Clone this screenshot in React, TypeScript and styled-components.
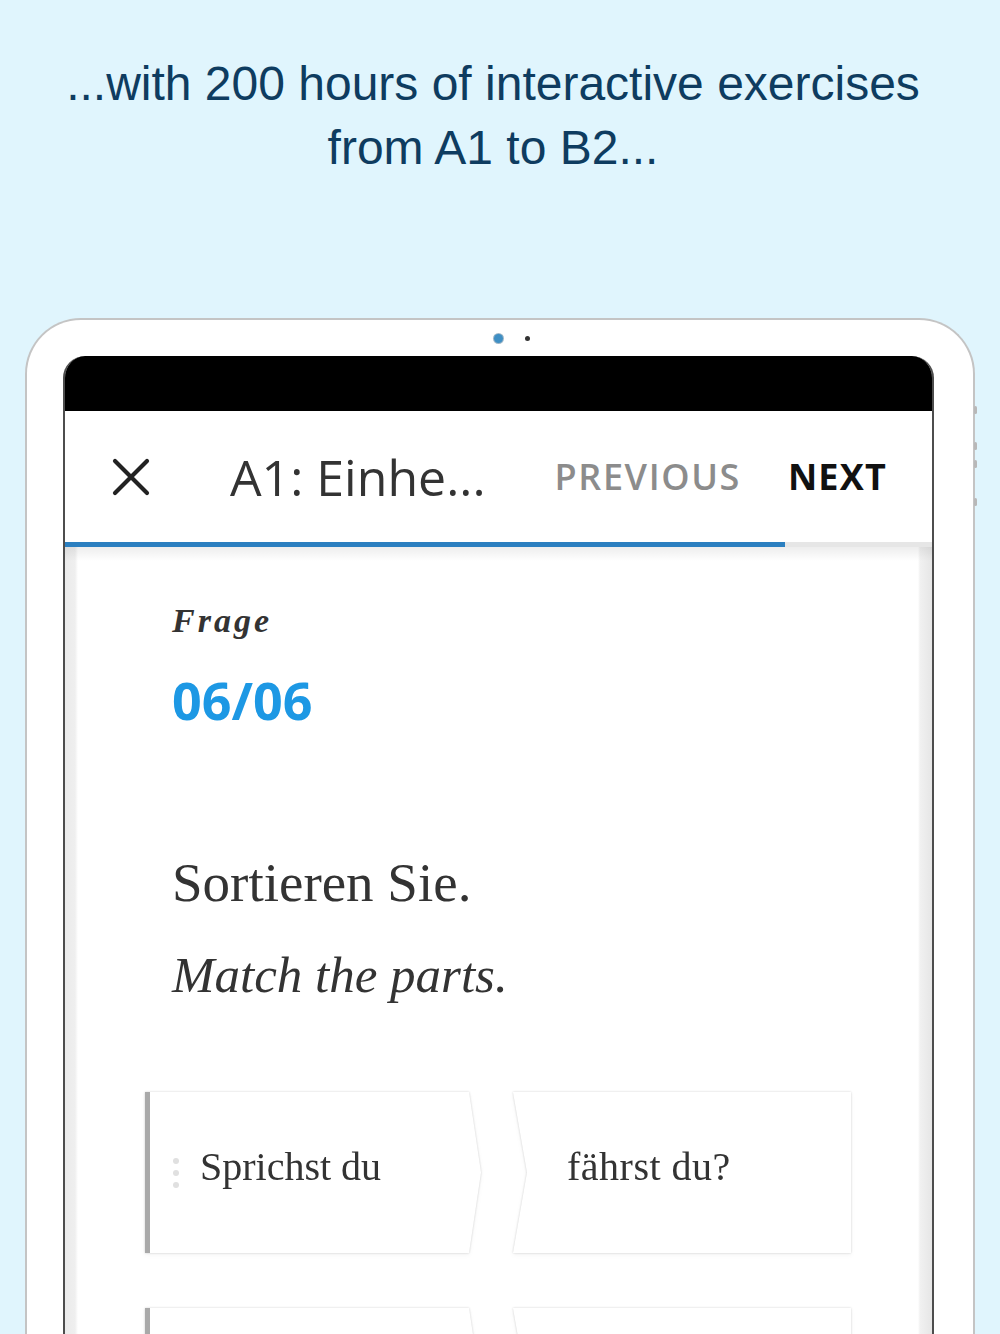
import React from "react";
import styled, { createGlobalStyle } from "styled-components";

const Global = createGlobalStyle`
  html, body { margin: 0; padding: 0; background: #e0f5fd; }
  * { box-sizing: border-box; }
`;

const Page = styled.div`
  width: 1000px;
  height: 1334px;
  overflow: hidden;
  background: #e0f5fd;
  display: flex;
  flex-direction: column;
  padding-top: 52px;
`;

const Headline = styled.h1`
  margin: 0;
  padding-right: 14px;
  font-family: "Liberation Sans", Arial, sans-serif;
  font-weight: 400;
  font-size: 48px;
  line-height: 64px;
  color: #0e3c60;
  text-align: center;
`;

const Tablet = styled.div`
  position: relative;
  margin: 138px 25px 0 25px;
  width: 950px;
  flex: 1;
  background: #fff;
  border: 2px solid #c4c4c4;
  border-bottom: none;
  border-radius: 56px 56px 0 0;
  display: flex;
  flex-direction: column;
`;

const SideKey = styled.span<{ $top: number; $h: number }>`
  position: absolute;
  right: -4px;
  top: ${(p) => p.$top}px;
  width: 3px;
  height: ${(p) => p.$h}px;
  background: #b8b8b8;
  border-radius: 2px;
`;

const CameraRow = styled.div`
  height: 36px;
  display: flex;
  align-items: center;
  padding-left: 467px;
  gap: 22px;
`;

const Lens = styled.span`
  width: 9px;
  height: 9px;
  border-radius: 50%;
  background: #3f8fc4;
  box-shadow: 0 0 0 1px #9fb7c8;
`;

const Sensor = styled.span`
  width: 5px;
  height: 5px;
  border-radius: 50%;
  background: #333;
`;

const Screen = styled.div`
  margin-left: 36px;
  width: 871px;
  flex: 1;
  display: flex;
  flex-direction: column;
  border-left: 2px solid #4d4d4d;
  border-right: 2px solid #4d4d4d;
  border-radius: 22px 22px 0 0;
  overflow: hidden;
  background: #fff;
`;

const StatusBar = styled.div`
  height: 55px;
  background: #000;
  flex-shrink: 0;
`;

const NavBar = styled.div`
  height: 131px;
  flex-shrink: 0;
  display: flex;
  align-items: center;
  padding: 0 45px 0 47px;
  background: #fff;
`;

const CloseButton = styled.span`
  width: 38px;
  height: 38px;
  display: flex;
  color: #222;
`;

const Title = styled.span`
  margin-left: 80px;
  font-family: "Open Sans", sans-serif;
  font-size: 50px;
  font-weight: 400;
  color: #333;
  white-space: nowrap;
`;

const NavLink = styled.span<{ $muted?: boolean }>`
  margin-left: ${(p) => (p.$muted ? "auto" : "47px")};
  font-family: "Open Sans", sans-serif;
  font-size: 36px;
  font-weight: ${(p) => (p.$muted ? 600 : 700)};
  letter-spacing: ${(p) => (p.$muted ? "1.6px" : "1.2px")};
  color: ${(p) => (p.$muted ? "#8c8c8c" : "#111")};
`;

const Progress = styled.div`
  height: 5px;
  flex-shrink: 0;
  background: #e6e6e6;
  display: flex;
`;

const ProgressFill = styled.div`
  height: 100%;
  background: #2b7fc0;
`;

const Content = styled.div`
  flex: 1;
  padding: 54px 60px 0 80px;
  display: flex;
  flex-direction: column;
  background:
    linear-gradient(to bottom, rgba(0, 0, 0, 0.07), rgba(0, 0, 0, 0) 14px),
    linear-gradient(
      to right,
      #ebebeb 0,
      #efefef 10px,
      #fff 13px,
      #fff calc(100% - 14px),
      #f1f1f1 calc(100% - 12px),
      #e6e6e6 100%
    );
`;

const Label = styled.div`
  padding-left: 27px;
  font-family: "Liberation Serif", serif;
  font-style: italic;
  font-weight: 700;
  font-size: 34px;
  line-height: 40px;
  letter-spacing: 3px;
  color: #333;
`;

const Counter = styled.div`
  margin-top: 29px;
  padding-left: 27px;
  font-family: "Open Sans", sans-serif;
  font-weight: 700;
  font-size: 52px;
  line-height: 60px;
  color: #1d98e4;
`;

const Instruction = styled.div`
  margin-top: 121px;
  padding-left: 27px;
  font-family: "Liberation Serif", serif;
  font-size: 55px;
  line-height: 64px;
  color: #333;
`;

const Translation = styled.div`
  margin-top: 30px;
  padding-left: 27px;
  font-family: "Liberation Serif", serif;
  font-style: italic;
  font-size: 51px;
  line-height: 60px;
  color: #333;
`;

const PairGrid = styled.div`
  margin-top: 87px;
  display: grid;
  grid-template-columns: 336px 338px;
  column-gap: 32px;
  row-gap: 55px;
`;

const CardWrap = styled.div`
  filter: drop-shadow(0 0 1px rgba(0, 0, 0, 0.18)) drop-shadow(0 2px 2px rgba(0, 0, 0, 0.04));
`;

const Card = styled.div<{ $side: "left" | "right" }>`
  height: 161px;
  background: #fff;
  display: flex;
  align-items: center;
  padding-bottom: 12px;
  font-family: "Liberation Serif", serif;
  font-size: 40px;
  color: #333;
  ${(p) =>
    p.$side === "left"
      ? `
    border-left: 5px solid #a9a9a9;
    padding-left: 23px;
    gap: 21px;
    clip-path: polygon(0 0, calc(100% - 12px) 0, 100% 50%, calc(100% - 12px) 100%, 0 100%);
  `
      : `
    padding-left: 54px;
    letter-spacing: 0.5px;
    clip-path: polygon(0 0, 100% 0, 100% 100%, 0 100%, 14px 50%);
  `}
`;

const Handle = styled.span`
  display: flex;
  flex-direction: column;
  gap: 6px;
  padding-top: 12px;
  & > i {
    width: 6px;
    height: 6px;
    border-radius: 50%;
    background: #e0e0e0;
  }
`;

const pairs = [
  ["Sprichst du", "fährst du?"],
  ["", ""],
];

export default function App() {
  return (
    <Page>
      <Global />
      <Headline>
        ...with 200 hours of interactive exercises
        <br />
        from A1 to B2...
      </Headline>
      <Tablet>
        <SideKey $top={86} $h={8} />
        <SideKey $top={122} $h={8} />
        <SideKey $top={140} $h={8} />
        <SideKey $top={178} $h={8} />
        <CameraRow>
          <Lens />
          <Sensor />
        </CameraRow>
        <Screen>
          <StatusBar />
          <NavBar>
            <CloseButton>
              <svg width="38" height="38" viewBox="0 0 38 38">
                <path d="M3 3 L35 35 M35 3 L3 35" stroke="currentColor" strokeWidth="4.2" strokeLinecap="round" />
              </svg>
            </CloseButton>
            <Title>A1: Einhe...</Title>
            <NavLink $muted>PREVIOUS</NavLink>
            <NavLink>NEXT</NavLink>
          </NavBar>
          <Progress>
            <ProgressFill style={{ width: "83%" }} />
          </Progress>
          <Content>
            <Label>Frage</Label>
            <Counter>06/06</Counter>
            <Instruction>Sortieren Sie.</Instruction>
            <Translation>Match the parts.</Translation>
            <PairGrid>
              {pairs.map(([a, b], i) => (
                <React.Fragment key={i}>
                  <CardWrap>
                    <Card $side="left">
                      {a && (
                        <Handle>
                          <i />
                          <i />
                          <i />
                        </Handle>
                      )}
                      {a}
                    </Card>
                  </CardWrap>
                  <CardWrap>
                    <Card $side="right">{b}</Card>
                  </CardWrap>
                </React.Fragment>
              ))}
            </PairGrid>
          </Content>
        </Screen>
      </Tablet>
    </Page>
  );
}
